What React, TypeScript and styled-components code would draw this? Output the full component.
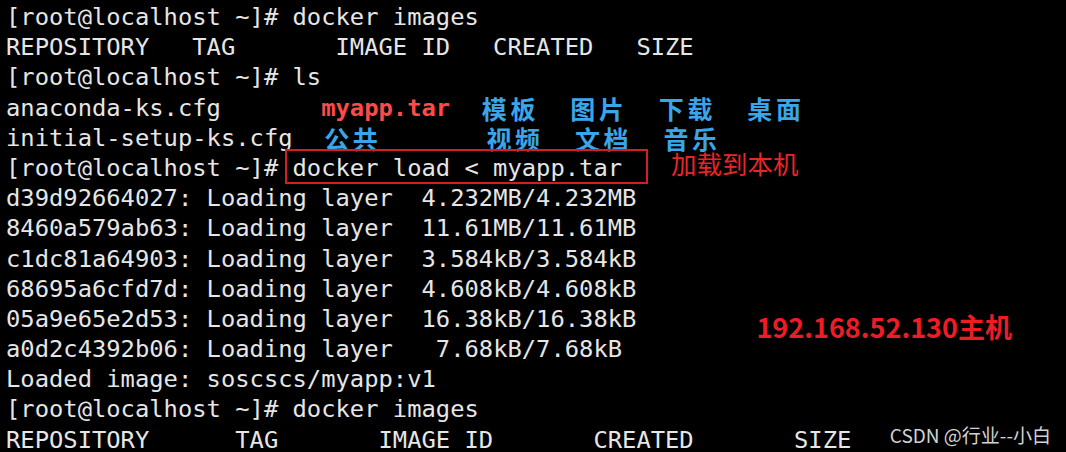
import styled, { createGlobalStyle } from "styled-components";

const Global = createGlobalStyle`
  html, body {
    margin: 0;
    background: #000;
  }
`;

// The terminal window
const Terminal = styled.div`
  position: relative;
  height: 452px;
  overflow: hidden;
  box-sizing: border-box;
  padding: 2px 0 0 6px;
  background: #000;
  color: #e6e6e6;
  font-family: "DejaVu Sans Mono", "Liberation Mono", monospace;
  font-size: 23.8px;
`;

const Line = styled.div`
  display: flex;
  align-items: center;
  height: 30.2px;
  line-height: 30.2px;
  white-space: pre;
`;

// a fixed-width column of the ls output, counted in terminal cells
const Cell = styled.span<{ $w: number }>`
  flex: none;
  box-sizing: border-box;
  width: calc(${(p) => p.$w} * 1ch);
`;

const RedFile = styled(Cell)`
  color: #ff4a4a;
  font-weight: bold;
`;

// directory names: each CJK glyph takes two terminal cells
const Dir = styled(Cell)`
  padding-left: 3px;
  color: #3aa6ea;
  font-family: "Noto Sans CJK SC", sans-serif;
  font-weight: bold;
  font-size: 25px;
  line-height: 28px;
  letter-spacing: 3.6px;
`;

const Boxed = styled.span`
  position: relative;
  &::before {
    content: "";
    position: absolute;
    top: -4px;
    bottom: -1px;
    left: -8px;
    right: -26px;
    border: 2px solid #d41e24;
  }
`;

const Note = styled.span`
  margin-left: 49px;
  position: relative;
  top: -5px;
  color: #e8262a;
  font-family: "Noto Sans CJK SC", sans-serif;
  font-size: 25.5px;
  line-height: 28px;
`;

const HostNote = styled.span`
  margin-left: 120px;
  position: relative;
  top: 8px;
  color: #ee1c24;
  font-family: "Noto Sans CJK SC", sans-serif;
  font-weight: bold;
  font-size: 27px;
  line-height: 30px;
`;

const Watermark = styled.div`
  position: absolute;
  right: 15px;
  bottom: 6px;
  color: #d2d2d2;
  font-family: "Noto Sans CJK SC", sans-serif;
  font-size: 19px;
  line-height: 22px;
`;

const prompt = "[root@localhost ~]# ";

const layers = [
  ["d39d92664027", "  4.232MB/4.232MB"],
  ["8460a579ab63", "  11.61MB/11.61MB"],
  ["c1dc81a64903", "  3.584kB/3.584kB"],
  ["68695a6cfd7d", "  4.608kB/4.608kB"],
  ["05a9e65e2d53", "  16.38kB/16.38kB"],
  ["a0d2c4392b06", "   7.68kB/7.68kB"],
];

export default function App() {
  return (
    <Terminal>
      <Global />
      <Line>{prompt}docker images</Line>
      <Line>REPOSITORY   TAG       IMAGE ID   CREATED   SIZE</Line>
      <Line>{prompt}ls</Line>
      <Line>
        <Cell $w={22}>anaconda-ks.cfg</Cell>
        <RedFile $w={11}>myapp.tar</RedFile>
        <Dir $w={6}>模板</Dir>
        <Dir $w={6}>图片</Dir>
        <Dir $w={6}>下载</Dir>
        <Dir $w={6}>桌面</Dir>
      </Line>
      <Line>
        <Cell $w={22}>initial-setup-ks.cfg</Cell>
        <Dir $w={11}>公共</Dir>
        <Dir $w={6}>视频</Dir>
        <Dir $w={6}>文档</Dir>
        <Dir $w={6}>音乐</Dir>
      </Line>
      <Line>
        {prompt}
        <Boxed>docker load &lt; myapp.tar</Boxed>
        <Note>加载到本机</Note>
      </Line>
      {layers.map(([id, size], i) => (
        <Line key={id}>
          {id}: Loading layer{size}
          {i === 4 && <HostNote>192.168.52.130主机</HostNote>}
        </Line>
      ))}
      <Line>Loaded image: soscscs/myapp:v1</Line>
      <Line>{prompt}docker images</Line>
      <Line>REPOSITORY      TAG       IMAGE ID       CREATED       SIZE</Line>
      <Watermark>CSDN @行业--小白</Watermark>
    </Terminal>
  );
}
